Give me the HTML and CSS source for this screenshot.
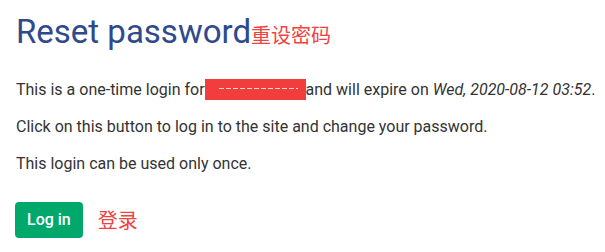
FILE: index.html
```html
<!DOCTYPE html>
<html lang="en">
<head>
<meta charset="utf-8">
<title>Reset password</title>
<link rel="stylesheet" href="styles.css">
</head>
<body>
<main class="page">
  <h1 class="title">Reset password<span class="note note-title">重设密码</span></h1>
  <p class="line">This is a one-time login for<span class="redact"></span>and will expire on <em>Wed, 2020-08-12 03:52</em>.</p>
  <p class="line">Click on this button to log in to the site and change your password.</p>
  <p class="line">This login can be used only once.</p>
  <div class="actions">
    <button class="btn" type="button">Log in</button>
    <span class="note note-btn">登录</span>
  </div>
</main>
</body>
</html>
```
FILE: styles.css
```css
html, body {
  margin: 0;
  padding: 0;
  background: #ffffff;
}
.page {
  padding: 0 16px;
  font-family: Roboto, "Noto Sans CJK SC", sans-serif;
  color: #333333;
}
.title {
  margin: 12px 0 0;
  font-size: 33px;
  line-height: 40px;
  font-weight: 400;
  color: #2f4a8c;
  white-space: nowrap;
}
.note {
  font-family: "Noto Sans CJK SC", sans-serif;
  color: #f04242;
  font-weight: 400;
}
.note-title {
  font-size: 20px;
}
.line {
  margin: 0 0 13px;
  font-size: 16px;
  line-height: 24px;
  white-space: nowrap;
}
.line:first-of-type {
  margin-top: 23px;
}
.redact {
  display: inline-block;
  width: 101px;
  height: 21px;
  vertical-align: -5px;
  background:
    repeating-linear-gradient(90deg, #ffd6d6 0 5px, transparent 5px 7px) 14px 9px / 79px 1px no-repeat,
    #f23d3d;
}
em {
  font-style: italic;
}
.actions {
  margin-top: 26px;
  display: flex;
  align-items: center;
  gap: 15px;
}
.btn {
  margin-left: -1px;
  height: 36px;
  padding: 0 12px;
  border: none;
  border-radius: 4px;
  background: #00a86b;
  color: #ffffff;
  font-family: Roboto, sans-serif;
  font-size: 16px;
  font-weight: 500;
  line-height: 24px;
}
.note-btn {
  font-size: 20px;
  line-height: 28px;
}
```
